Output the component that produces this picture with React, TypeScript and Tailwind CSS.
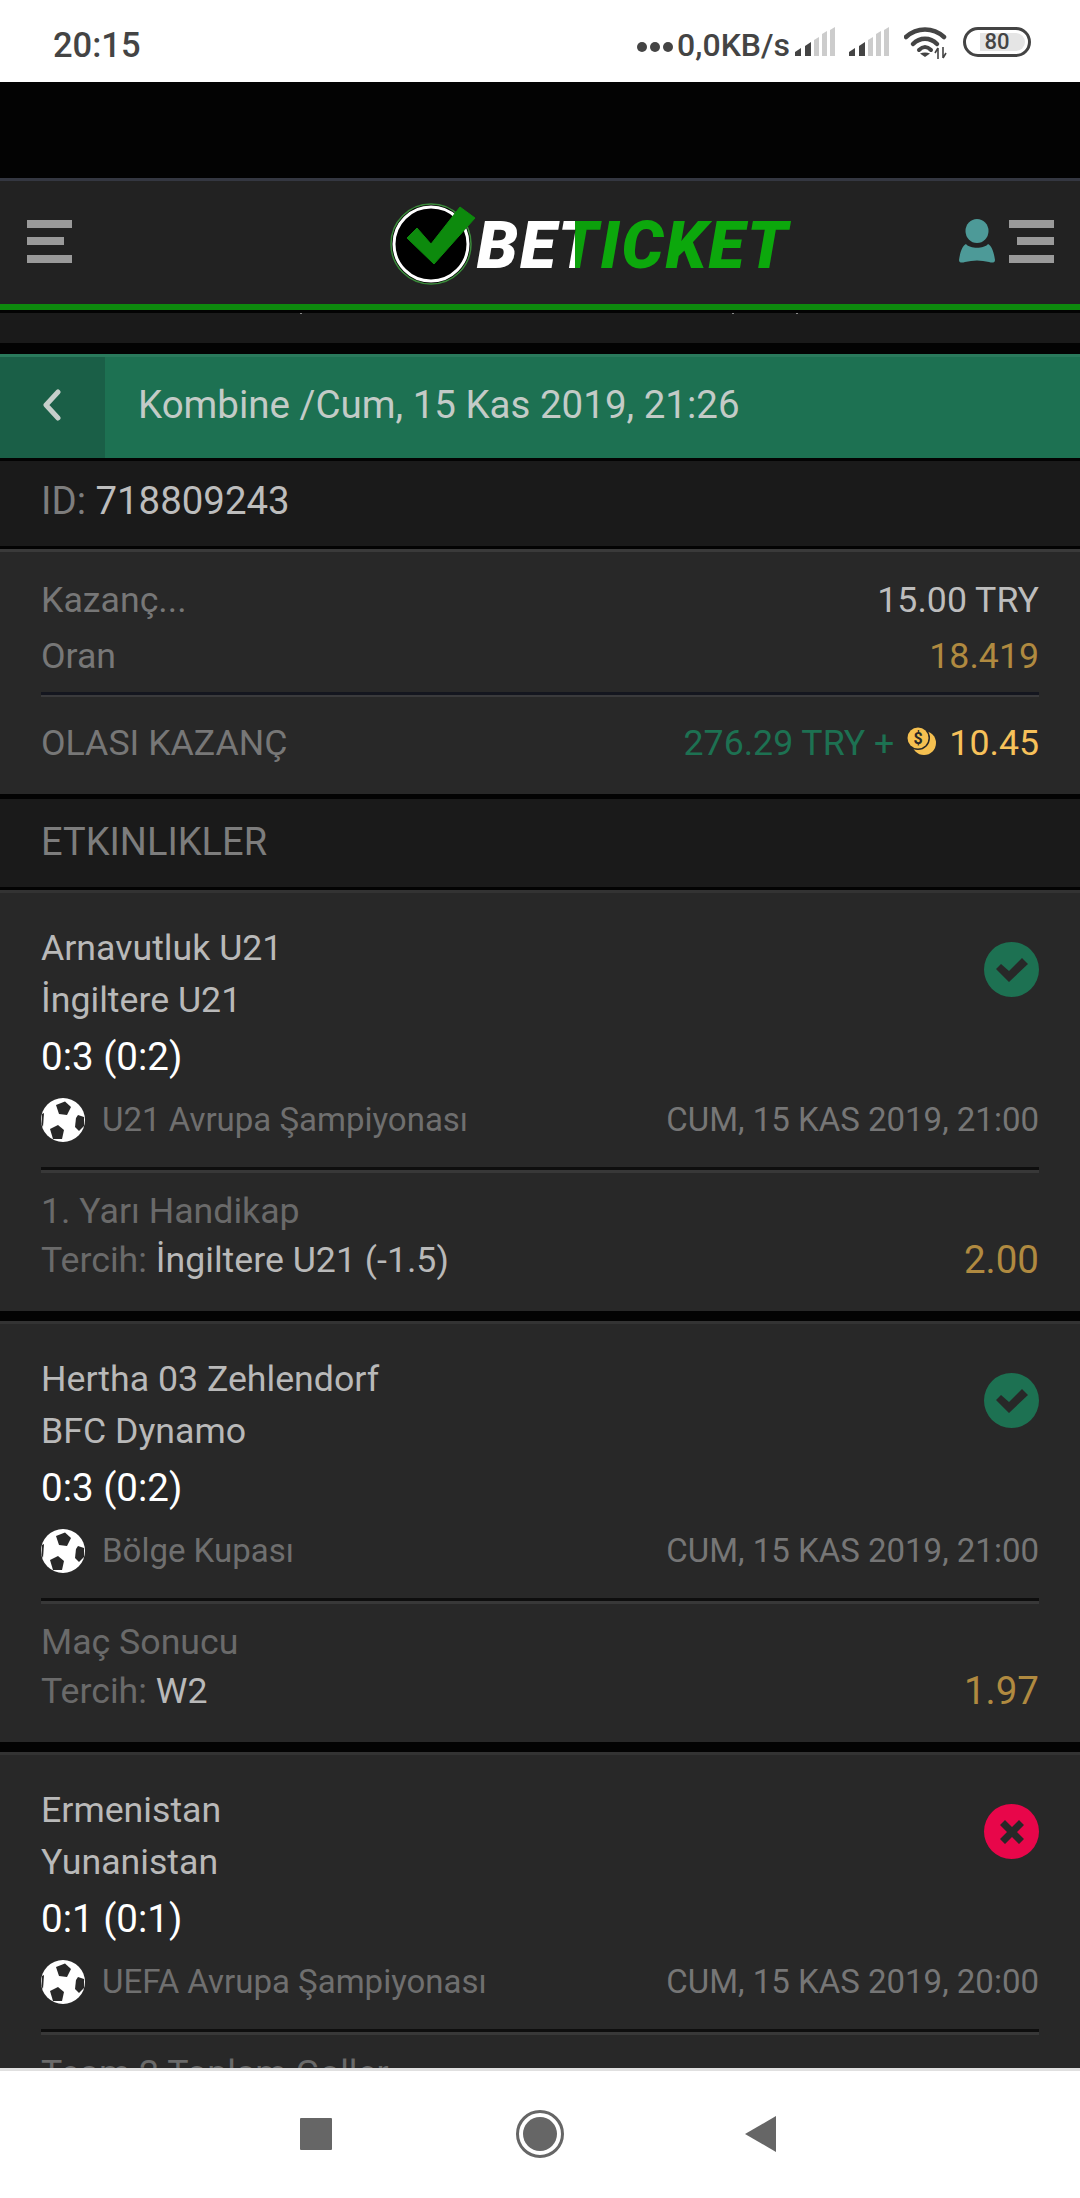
import React from "react";

const roboto = "font-['Roboto',sans-serif]";

function SignalBars() {
  return (
    <svg width="40" height="29" viewBox="0 0 40 29">
      <path d="M0 29 L0 25 L6 21 L6 29Z" fill="#444" />
      <path d="M10 29 V19 L16 15 V29Z" fill="#444" />
      <path d="M19 29 V13 L24 10 V29Z" fill="#ccc" />
      <path d="M27 29 V7 L32 4 V29Z" fill="#ccc" />
      <path d="M35 29 V3 L40 0 V29Z" fill="#ccc" />
    </svg>
  );
}

function Wifi() {
  return (
    <svg width="44" height="32" viewBox="0 0 44 32" fill="none">
      <path d="M2 10 C13 0 29 0 40 10" stroke="#444" strokeWidth="4.5" strokeLinecap="round" />
      <path d="M9 17 C16 10 26 10 33 17" stroke="#444" strokeWidth="4.5" strokeLinecap="round" />
      <path d="M15 23 C19 19 23 19 27 23" stroke="#444" strokeWidth="4" strokeLinecap="round" />
      <path d="M21 30 L16 26.5 C19 25 23 25 26 26.5Z" fill="#444" />
      <path d="M34 21 V32 M31 26 L34 21 M39 20 V31 M39 31 L42 26" stroke="#444" strokeWidth="1.6" />
    </svg>
  );
}

function StatusBar() {
  return (
    <div className={`flex h-[82px] items-center justify-between bg-white pl-[53px] pr-[49px] pt-[7px] text-[#444] ${roboto}`}>
      <span className="mt-[2px] text-[34.5px] font-medium leading-none">20:15</span>
      <div className="flex items-center">
        <div className="mt-[4px] flex gap-[3px]">
          <span className="size-[10px] rounded-full bg-[#444]" />
          <span className="size-[10px] rounded-full bg-[#444]" />
          <span className="size-[10px] rounded-full bg-[#444]" />
        </div>
        <span className="ml-[4px] text-[32px] font-medium leading-none">0,0KB/s</span>
        <div className="ml-[5px] -mt-[6px]"><SignalBars /></div>
        <div className="ml-[14px] -mt-[6px]"><SignalBars /></div>
        <div className="ml-[15px] -mt-[4px]"><Wifi /></div>
        <div className="relative ml-[15px] -mt-[6px] flex h-[30px] w-[68px] items-center justify-center rounded-full border-[3px] border-[#444]">
          <div className="absolute right-[3px] top-[3px] h-[18px] w-[45px] rounded-r-full bg-[#e5e5e5]" />
          <span className="relative text-[22px] font-medium leading-none">80</span>
        </div>
      </div>
    </div>
  );
}

function Bars({ alignRight }: { alignRight?: boolean }) {
  return (
    <div className={`flex w-[45px] flex-col gap-[9.5px] ${alignRight ? "items-end" : "items-start"}`}>
      <span className="h-[8px] w-[45px] bg-[#9a9a9a]" />
      <span className="h-[8px] w-[37px] bg-[#9a9a9a]" />
      <span className="h-[8px] w-[45px] bg-[#9a9a9a]" />
    </div>
  );
}

function Logo() {
  return (
    <div className="mt-[6px] flex items-center">
      <svg width="88" height="84" viewBox="0 0 88 84" className="shrink-0">
        <circle cx="41" cy="42" r="40" fill="#000" stroke="#3b8a3b" strokeWidth="1.5" />
        <circle cx="41" cy="42" r="37" fill="#000" stroke="#ffffff" strokeWidth="3" />
        <path d="M17 36 L27 26 L41 42 L70 5 L85 16 L44 62Z" fill="#0d8a0d" stroke="#0d8a0d" strokeWidth="1" />
      </svg>
      <div className="ml-[-1px] mt-[4px] flex font-['Roboto',sans-serif] text-[66px] font-black italic leading-none tracking-[2px]">
        <span className="text-white">BE</span>
        <span className="bg-linear-to-r from-white from-[38%] to-[#0ca00c] to-[38%] bg-clip-text pr-[4px] text-transparent">T</span>
        <span className="-ml-[4px] text-[#0ca80c]">ICKET</span>
      </div>
    </div>
  );
}

function TopBar() {
  return (
    <div className="flex h-[126px] items-center justify-between border-t-[3px] border-[#343741] bg-[#222222] pb-[3px] pl-[27px] pr-[26px]">
      <Bars />
      <div className="ml-[148px]"><Logo /></div>
      <div className="flex items-center gap-[14px]">
        <svg width="36" height="44" viewBox="0 0 36 44">
          <ellipse cx="18" cy="12" rx="11.5" ry="12" fill="#4d9a98" />
          <path d="M7 25 C11 30 25 30 29 25 C33 27 35 34 36 41 C36 44 33 44 30 43 C22 41 14 41 6 43 C3 44 0 44 0 41 C1 34 3 27 7 25Z" fill="#4d9a98" />
        </svg>
        <Bars alignRight />
      </div>
    </div>
  );
}

function Ball() {
  return (
    <svg width="44" height="44" viewBox="0 0 44 44" className="shrink-0">
      <circle cx="22" cy="22" r="22" fill="#fff" />
      <path d="M15 7 L24 3.5 L30 9 L26 17 L18 16Z" fill="#282828" />
      <path d="M37 17 L43 19 L43 28 L38 33 L34 29 L35 20Z" fill="#282828" />
      <path d="M9 31 L17 27 L23 32 L21 41 L12 41Z" fill="#282828" />
      <path d="M1 16 L3 15 L2 29 L0.5 26Z" fill="#282828" />
    </svg>
  );
}

function Status({ ok }: { ok: boolean }) {
  return (
    <div className={`flex h-[55px] w-[55px] items-center justify-center rounded-full ${ok ? "bg-[#1d7152]" : "bg-[#e8064a]"}`}>
      {ok ? (
        <svg width="34" height="26" viewBox="0 0 34 26">
          <path d="M1 12 L6 7 L14 14 L27 1 L33 7 L14 25Z" fill="#282828" />
        </svg>
      ) : (
        <svg width="26" height="26" viewBox="0 0 26 26">
          <path d="M6 1 L13 8 L20 1 L25 6 L18 13 L25 20 L20 25 L13 18 L6 25 L1 20 L8 13 L1 6Z" fill="#282828" />
        </svg>
      )}
    </div>
  );
}

function Rule({ className = "" }: { className?: string }) {
  return <div className={`h-[6px] border-t-[3px] border-[#0e0e0e] bg-[#383838] ${className}`} />;
}

type Bet = {
  home: string;
  away: string;
  score: string;
  league: string;
  date: string;
  market: string;
  pick?: string;
  odd?: string;
  ok: boolean;
};

const bets: Bet[] = [
  { home: "Arnavutluk U21", away: "İngiltere U21", score: "0:3 (0:2)", league: "U21 Avrupa Şampiyonası", date: "CUM, 15 KAS 2019, 21:00", market: "1. Yarı Handikap", pick: "İngiltere U21 (-1.5)", odd: "2.00", ok: true },
  { home: "Hertha 03 Zehlendorf", away: "BFC Dynamo", score: "0:3 (0:2)", league: "Bölge Kupası", date: "CUM, 15 KAS 2019, 21:00", market: "Maç Sonucu", pick: "W2", odd: "1.97", ok: true },
  { home: "Ermenistan", away: "Yunanistan", score: "0:1 (0:1)", league: "UEFA Avrupa Şampiyonası", date: "CUM, 15 KAS 2019, 20:00", market: "Team 2 Toplam Goller", ok: false },
];

function BetCard({ bet }: { bet: Bet }) {
  return (
    <div className="mb-[10px] h-[421px] border-t-[3px] border-[#333333] bg-[#282828] px-[41px] pt-[29px]">
      <div className="flex justify-between">
        <div>
          <div className="h-[52px] text-[35.7px] leading-[52px] text-[#b9b9b9]">{bet.home}</div>
          <div className="h-[53px] text-[35.7px] leading-[53px] text-[#b9b9b9]">{bet.away}</div>
          <div className="h-[60px] text-[38.5px] leading-[60px] text-white">{bet.score}</div>
        </div>
        <div className="pt-[20px]"><Status ok={bet.ok} /></div>
      </div>
      <div className="mt-[1px] flex h-[64px] items-center justify-between">
        <div className="flex items-center gap-[17px]">
          <Ball />
          <span className="text-[33px] text-[#6f6f6f]">{bet.league}</span>
        </div>
        <span className="text-[33px] text-[#767676]">{bet.date}</span>
      </div>
      <Rule className="mt-[15px]" />
      <div className="mt-[13px] h-[50px] text-[35.7px] leading-[50px] text-[#6a6a6a]">{bet.market}</div>
      {bet.pick && (
        <div className="flex h-[50px] items-center justify-between text-[35.7px]">
          <div>
            <span className="text-[#6a6a6a]">Tercih: </span>
            <span className="text-[#b9b9b9]">{bet.pick}</span>
          </div>
          <span className="mb-[2px] text-[38.5px] text-[#b08a40]">{bet.odd}</span>
        </div>
      )}
    </div>
  );
}

function Coins() {
  return (
    <svg width="30" height="30" viewBox="0 0 30 30" className="shrink-0">
      <circle cx="18" cy="17" r="12" fill="#f5c050" />
      <circle cx="12" cy="12" r="12" fill="#282828" />
      <circle cx="12" cy="12" r="10.5" fill="#f5c050" />
      <text x="12" y="18" textAnchor="middle" fontSize="16" fontWeight="700" fontFamily="Roboto, sans-serif" fill="#282828">$</text>
    </svg>
  );
}

export default function App() {
  return (
    <div className={`flex h-[2198px] w-[1080px] flex-col overflow-hidden bg-[#030303] ${roboto}`}>
      <StatusBar />
      <div className="h-[96px] shrink-0 bg-[#030303]" />
      <TopBar />
      <div className="h-[6px] shrink-0 bg-[#0d8a0d]" />
      <div className="h-[3px] shrink-0 bg-[#030303]" />
      <div className="relative h-[30px] shrink-0 bg-[#1a1a1a]">
        <span className="absolute left-[300px] top-0 h-px w-[2px] bg-[#8a8a8a]" />
        <span className="absolute left-[732px] top-0 h-px w-[2px] bg-[#8a8a8a]" />
        <span className="absolute left-[796px] top-0 h-px w-[2px] bg-[#8a8a8a]" />
      </div>
      <div className="min-h-0 flex-1 overflow-hidden pt-[11px]">
        <div className="flex h-[104px] border-t-[3px] border-[#2a7a5c] bg-[#1d7152]">
          <div className="flex h-full w-[105px] items-center bg-[#1a5f47] pb-[5px] pl-[41px]">
            <svg width="22" height="32" viewBox="0 0 22 32" fill="none">
              <path d="M17 3 L5 16 L17 29" stroke="#c6cfcb" strokeWidth="5" strokeLinecap="round" strokeLinejoin="round" />
            </svg>
          </div>
          <div className="flex items-center pb-[5px] pl-[33px] text-[38.5px] text-[#c3cbc7]">Kombine /Cum, 15 Kas 2019, 21:26</div>
        </div>
        <div className="mt-[3px] flex h-[85px] items-center bg-[#1a1a1a] pb-[6px] pl-[41px] text-[38.4px]">
          <span className="text-[#7d7d7d]">ID:&nbsp;</span>
          <span className="text-[#bdbdbd]">718809243</span>
        </div>
        <div className="mt-[3px] h-[245px] border-t-[3px] border-[#3a3a3a] bg-[#282828] px-[41px] pt-[20px] text-[35.7px]">
          <div className="flex h-[57px] items-center justify-between">
            <span className="text-[#777777]">Kazanç...</span>
            <span className="text-[#bdbdbd]">15.00 TRY</span>
          </div>
          <div className="flex h-[56px] items-center justify-between">
            <span className="text-[#777777]">Oran</span>
            <span className="text-[#b08a40]">18.419</span>
          </div>
          <div className="mt-[7px] h-[5px] border-t-[3px] border-[#14161f] bg-[#3a3a3c]" />
          <div className="mt-[19px] flex h-[56px] items-center justify-between">
            <span className="text-[#777777]">OLASI KAZANÇ</span>
            <div className="flex items-center">
              <span className="text-[#1d7152]">276.29 TRY +</span>
              <span className="ml-[12px] -mt-[6px]"><Coins /></span>
              <span className="ml-[13px] text-[#f7c15a]">10.45</span>
            </div>
          </div>
        </div>
        <div className="mt-[5px] flex h-[88px] items-center bg-[#1a1a1a] pb-[2px] pl-[41px] text-[38px] text-[#7d7d7d]">ETKINLIKLER</div>
        <div className="mt-[3px]">
          {bets.map((bet) => (
            <BetCard key={bet.home} bet={bet} />
          ))}
        </div>
      </div>
      <div className="flex h-[130px] shrink-0 items-center justify-center border-t-[3px] border-[#e0e0e0] bg-white pb-[2px] pr-[4px]">
        <div className="flex items-center">
          <span className="h-[32px] w-[32px] rounded-[1px] bg-[#666666]" />
          <span className="ml-[184px] flex h-[48px] w-[48px] items-center justify-center rounded-full border-[3px] border-[#666666]">
            <span className="h-[34px] w-[34px] rounded-full bg-[#666666]" />
          </span>
          <svg width="31" height="36" viewBox="0 0 31 36" className="ml-[181px]">
            <path d="M31 0 V36 L0 18Z" fill="#666666" />
          </svg>
        </div>
      </div>
    </div>
  );
}
